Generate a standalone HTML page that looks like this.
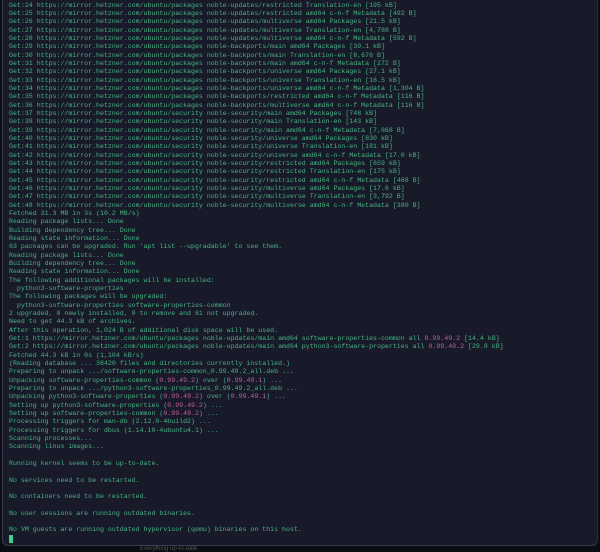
<!DOCTYPE html>
<html><head><meta charset="utf-8"><style>
html,body{margin:0;padding:0;background:#0c0d14;width:600px;height:551px;overflow:hidden}
.t{position:absolute;left:2px;top:0;width:596px;height:546px;background:#181a29;border-left:1px solid #3a3d4e;border-bottom:1px solid #3a3d4e;border-right:1px solid #2a2d3e;border-radius:0 0 6px 6px;box-sizing:border-box}
pre{position:absolute;left:9px;top:1.8px;margin:0;font-family:"Liberation Mono",monospace;font-size:6.6px;line-height:8.33px;color:#47b383;white-space:pre}
.p{color:#c0609c}
.c{display:inline-block;width:4px;height:8px;background:#3fcf8e;vertical-align:top}
.f{position:absolute;left:140px;top:546px;font-family:"Liberation Sans",sans-serif;font-size:6px;color:#555}
</style></head><body><div class="t"></div>
<pre>Get:24 https://mirror.hetzner.com/ubuntu/packages noble-updates/restricted Translation-en [195 kB]
Get:25 https://mirror.hetzner.com/ubuntu/packages noble-updates/restricted amd64 c-n-f Metadata [492 B]
Get:26 https://mirror.hetzner.com/ubuntu/packages noble-updates/multiverse amd64 Packages [21.5 kB]
Get:27 https://mirror.hetzner.com/ubuntu/packages noble-updates/multiverse Translation-en [4,788 B]
Get:28 https://mirror.hetzner.com/ubuntu/packages noble-updates/multiverse amd64 c-n-f Metadata [592 B]
Get:29 https://mirror.hetzner.com/ubuntu/packages noble-backports/main amd64 Packages [39.1 kB]
Get:30 https://mirror.hetzner.com/ubuntu/packages noble-backports/main Translation-en [8,676 B]
Get:31 https://mirror.hetzner.com/ubuntu/packages noble-backports/main amd64 c-n-f Metadata [272 B]
Get:32 https://mirror.hetzner.com/ubuntu/packages noble-backports/universe amd64 Packages [27.1 kB]
Get:33 https://mirror.hetzner.com/ubuntu/packages noble-backports/universe Translation-en [16.5 kB]
Get:34 https://mirror.hetzner.com/ubuntu/packages noble-backports/universe amd64 c-n-f Metadata [1,304 B]
Get:35 https://mirror.hetzner.com/ubuntu/packages noble-backports/restricted amd64 c-n-f Metadata [116 B]
Get:36 https://mirror.hetzner.com/ubuntu/packages noble-backports/multiverse amd64 c-n-f Metadata [116 B]
Get:37 https://mirror.hetzner.com/ubuntu/security noble-security/main amd64 Packages [748 kB]
Get:38 https://mirror.hetzner.com/ubuntu/security noble-security/main Translation-en [143 kB]
Get:39 https://mirror.hetzner.com/ubuntu/security noble-security/main amd64 c-n-f Metadata [7,868 B]
Get:40 https://mirror.hetzner.com/ubuntu/security noble-security/universe amd64 Packages [830 kB]
Get:41 https://mirror.hetzner.com/ubuntu/security noble-security/universe Translation-en [181 kB]
Get:42 https://mirror.hetzner.com/ubuntu/security noble-security/universe amd64 c-n-f Metadata [17.0 kB]
Get:43 https://mirror.hetzner.com/ubuntu/security noble-security/restricted amd64 Packages [659 kB]
Get:44 https://mirror.hetzner.com/ubuntu/security noble-security/restricted Translation-en [175 kB]
Get:45 https://mirror.hetzner.com/ubuntu/security noble-security/restricted amd64 c-n-f Metadata [468 B]
Get:46 https://mirror.hetzner.com/ubuntu/security noble-security/multiverse amd64 Packages [17.6 kB]
Get:47 https://mirror.hetzner.com/ubuntu/security noble-security/multiverse Translation-en [3,792 B]
Get:48 https://mirror.hetzner.com/ubuntu/security noble-security/multiverse amd64 c-n-f Metadata [380 B]
Fetched 31.3 MB in 3s (10.2 MB/s)
Reading package lists... Done
Building dependency tree... Done
Reading state information... Done
63 packages can be upgraded. Run 'apt list --upgradable' to see them.
Reading package lists... Done
Building dependency tree... Done
Reading state information... Done
The following additional packages will be installed:
  python3-software-properties
The following packages will be upgraded:
  python3-software-properties software-properties-common
2 upgraded, 0 newly installed, 0 to remove and 61 not upgraded.
Need to get 44.3 kB of archives.
After this operation, 1,024 B of additional disk space will be used.
Get:1 https://mirror.hetzner.com/ubuntu/packages noble-updates/main amd64 software-properties-common all <span class="p">0.99.49.2</span> [14.4 kB]
Get:2 https://mirror.hetzner.com/ubuntu/packages noble-updates/main amd64 python3-software-properties all <span class="p">0.99.49.2</span> [29.8 kB]
Fetched 44.3 kB in 0s (1,104 kB/s)
(Reading database ... 38420 files and directories currently installed.)
Preparing to unpack .../software-properties-common_0.99.49.2_all.deb ...
Unpacking software-properties-common (<span class="p">0.99.49.2</span>) over (<span class="p">0.99.49.1</span>) ...
Preparing to unpack .../python3-software-properties_0.99.49.2_all.deb ...
Unpacking python3-software-properties (<span class="p">0.99.49.2</span>) over (<span class="p">0.99.49.1</span>) ...
Setting up python3-software-properties (<span class="p">0.99.49.2</span>) ...
Setting up software-properties-common (<span class="p">0.99.49.2</span>) ...
Processing triggers for man-db (2.12.0-4build2) ...
Processing triggers for dbus (1.14.10-4ubuntu4.1) ...
Scanning processes...
Scanning linux images...

Running kernel seems to be up-to-date.

No services need to be restarted.

No containers need to be restarted.

No user sessions are running outdated binaries.

No VM guests are running outdated hypervisor (qemu) binaries on this host.
<span class="c"></span></pre>
<div class="f">Everything up-to-date</div>
</body></html>
